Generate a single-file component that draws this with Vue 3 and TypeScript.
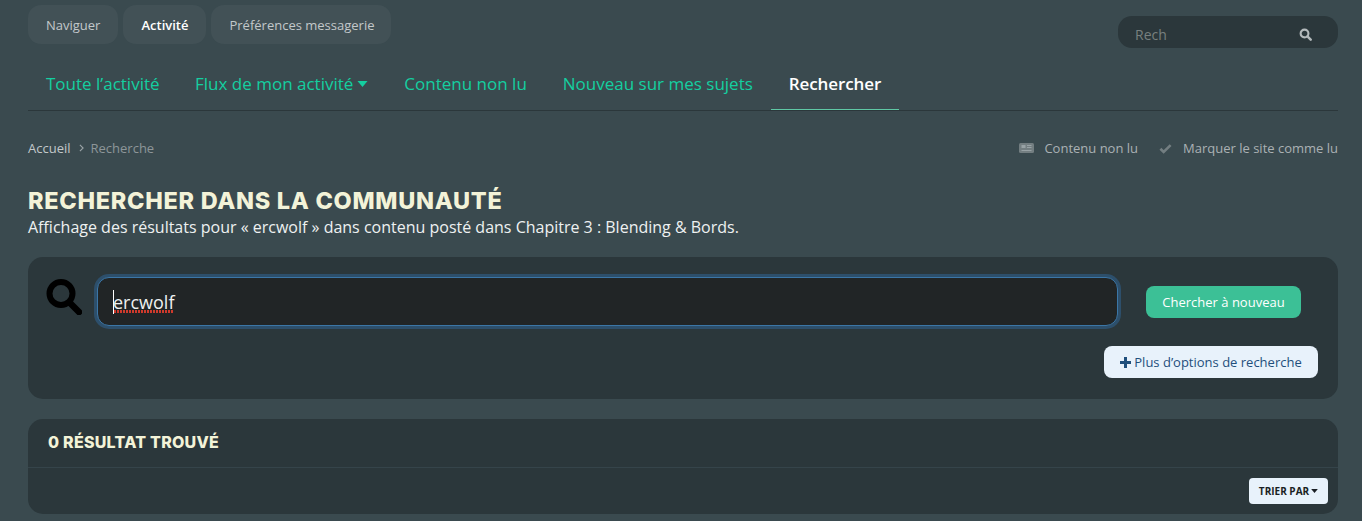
<script setup lang="ts">
const tabs: { label: string; active?: boolean }[] = [
  { label: 'Naviguer' },
  { label: 'Activité', active: true },
  { label: 'Préférences messagerie' },
]
const navItems: { label: string; caret?: boolean; active?: boolean }[] = [
  { label: 'Toute l’activité' },
  { label: 'Flux de mon activité', caret: true },
  { label: 'Contenu non lu' },
  { label: 'Nouveau sur mes sujets' },
  { label: 'Rechercher', active: true },
]
</script>

<template>
  <div class="page">
    <header class="head">
      <div class="top">
        <div class="tabs">
          <a v-for="t in tabs" :key="t.label" class="tab" :class="{ on: t.active }">{{ t.label }}</a>
        </div>
        <div class="search">
          <span class="ph">Rech</span>
          <svg class="s-ico" viewBox="0 0 16 16" width="13" height="13">
            <circle cx="6.8" cy="6.8" r="4.8" fill="none" stroke="currentColor" stroke-width="2.6" />
            <path d="M10.4 10.4 14.4 14.4" stroke="currentColor" stroke-width="3" stroke-linecap="round" />
          </svg>
        </div>
      </div>
      <nav class="nav">
        <a v-for="n in navItems" :key="n.label" class="nav-item" :class="{ on: n.active }">
          {{ n.label }}<svg v-if="n.caret" class="caret" viewBox="0 0 10 6" width="11" height="6"><path d="M0 0h10L5 6z" fill="currentColor" /></svg>
        </a>
      </nav>
    </header>

    <main class="main">
      <div class="crumbs">
        <div class="crumb-left">
          <span class="c1">Accueil</span>
          <svg class="chev" viewBox="0 0 6 10" width="5" height="8"><path d="M1 1l4 4-4 4" fill="none" stroke="currentColor" stroke-width="1.4" /></svg>
          <span class="c2">Recherche</span>
        </div>
        <div class="crumb-right">
          <span class="act">
            <svg viewBox="0 0 15 10" width="15" height="10" class="act-ico news">
              <rect width="15" height="10" rx="1.5" fill="currentColor" />
              <rect x="2.5" y="2" width="4" height="3" fill="#98a2a5" />
              <path d="M8 2.5h4.5M8 4.5h4.5M2.5 7.5h10" stroke="#98a2a5" stroke-width="1" />
            </svg>
            Contenu non lu
          </span>
          <span class="act">
            <svg viewBox="0 0 14 11" width="13" height="11" class="act-ico">
              <path d="M1.5 5.8 5 9.2 12.5 1.8" fill="none" stroke="currentColor" stroke-width="2.8" />
            </svg>
            Marquer le site comme lu
          </span>
        </div>
      </div>

      <h1 class="title">RECHERCHER DANS LA COMMUNAUTÉ</h1>
      <p class="sub">Affichage des résultats pour « ercwolf » dans contenu posté dans Chapitre 3 : Blending &amp; Bords.</p>

      <section class="card form">
        <div class="form-row">
          <svg class="big-ico" viewBox="0 0 36 36" width="36" height="36">
            <circle cx="15" cy="14.5" r="11.5" fill="none" stroke="#000" stroke-width="6" />
            <path d="M24 24 33 33" stroke="#000" stroke-width="6.5" stroke-linecap="round" />
          </svg>
          <div class="input"><span class="caret-bar"></span><span class="typed">ercwolf</span></div>
          <button class="btn-go">Chercher à nouveau</button>
        </div>
        <div class="form-more">
          <button class="btn-more">
            <svg viewBox="0 0 11 11" width="11" height="11"><path d="M4 0h3v4h4v3H7v4H4V7H0V4h4z" fill="currentColor" /></svg>
            Plus d’options de recherche
          </button>
        </div>
      </section>

      <section class="card results">
        <h2 class="res-title">0 RÉSULTAT TROUVÉ</h2>
        <div class="res-bar">
          <button class="btn-sort">TRIER PAR<svg viewBox="0 0 10 6" width="7" height="4"><path d="M0 0h10L5 6z" fill="currentColor" /></svg></button>
        </div>
      </section>
    </main>
  </div>
</template>

<style>
html, body { margin: 0; background: #3a4a4f; overflow: hidden; }
</style>

<style scoped>
.page {
  width: 1362px;
  height: 521px;
  overflow: hidden;
  background: #3a4a4f;
  font-family: "Open Sans", "Liberation Sans", sans-serif;
  color: #fff;
}
.head { padding: 5px 24px 0 28px; }
.top { display: flex; justify-content: space-between; align-items: flex-start; }
.tabs { display: flex; gap: 5px; }
.tab {
  height: 39px;
  padding: 0 18px;
  display: flex;
  align-items: center;
  border-radius: 13px;
  background: #425156;
  font-size: 13px;
  color: #c2c8ca;
}
.tab:last-child { padding-right: 17px; }
.tab.on { color: #fff; font-weight: 600; }
.search {
  width: 220px;
  height: 32px;
  margin-top: 11px;
  border-radius: 14px;
  background: #2b373b;
  display: flex;
  align-items: center;
  justify-content: space-between;
  padding: 4px 26px 0 17px;
  box-sizing: border-box;
  font-size: 14px;
  color: #78807f;
}
.s-ico { color: #b4babc; }
.nav {
  display: flex;
  margin-top: 9px;
  height: 53px;
  border-bottom: 1px solid #2b373b;
}
.nav-item {
  padding: 0 18px;
  height: 53px;
  box-sizing: border-box;
  display: flex;
  align-items: center;
  font-size: 17px;
  color: #14cfa0;
  white-space: nowrap;
}
.nav-item:first-child { padding-right: 17.5px; }
.nav-item.on { color: #fff; font-weight: 600; letter-spacing: -0.1px; border-bottom: 1px solid #5fc8a5; }
.caret { margin-left: 4px; margin-top: 1px; }
.main { padding: 0 24px 0 28px; }
.crumbs {
  display: flex;
  justify-content: space-between;
  align-items: center;
  height: 20px;
  margin-top: 27px;
  font-size: 13px;
}
.crumb-left { display: flex; align-items: center; }
.c1 { color: #c2c8ca; }
.chev { color: #9aa3a6; margin: 0 7px 0 8px; }
.c2 { color: #8d9699; }
.crumb-right { display: flex; gap: 21px; color: #aab1b4; }
.act { display: flex; align-items: center; }
.act-ico { color: #737e81; margin-right: 11px; }
.act-ico.news { margin-right: 10px; }
.title {
  margin: 29px 0 0;
  font-family: "Inter", "Liberation Sans", sans-serif;
  font-weight: 800;
  font-size: 23.5px;
  letter-spacing: 0.7px;
  line-height: 27px;
  color: #f3f3d8;
  white-space: nowrap;
}
.sub {
  margin: 0;
  font-size: 16px;
  line-height: 26px;
  color: #eef1f1;
}
.card {
  background: #2b373b;
  border-radius: 15px;
}
.form {
  margin-top: 17px;
  height: 142px;
  padding: 20px 20px 0 18px;
  box-sizing: border-box;
}
.form-row { display: flex; align-items: flex-start; }
.big-ico { margin-top: 2px; flex: none; }
.input {
  width: 1021px;
  height: 49px;
  margin-left: 15px;
  box-sizing: border-box;
  background: #212526;
  border: 1px solid #3b76a6;
  border-radius: 12px;
  box-shadow: 0 0 0 3px #2d4f6b;
  display: flex;
  align-items: center;
  padding-left: 15px;
  font-size: 18px;
  color: #eef1f1;
  position: relative;
}
.caret-bar { position: absolute; left: 15px; top: 12px; width: 1px; height: 24px; background: #fff; }
.typed { position: relative; }
.typed::after {
  content: "";
  position: absolute;
  left: 1px;
  right: 1px;
  bottom: 1px;
  height: 3px;
  background: repeating-linear-gradient(90deg, #cf3a2c 0 2px, transparent 2px 3px);
}
.btn-go {
  margin: 9px 0 0 28px;
  width: 155px;
  height: 32px;
  border: 0;
  border-radius: 8px;
  background: #3cc096;
  color: #fff;
  font: 400 13px "Open Sans", sans-serif;
  padding: 0;
}
.form-more { display: flex; justify-content: flex-end; margin-top: 20px; }
.btn-more {
  width: 214px;
  height: 32px;
  border: 0;
  border-radius: 8px;
  background: #e8f2fb;
  color: #1f4f7c;
  font: 400 13px "Open Sans", sans-serif;
  padding: 0;
  display: flex;
  align-items: center;
  justify-content: center;
  gap: 3px;
}
.results { margin-top: 20px; height: 95px; }
.res-title {
  margin: 0;
  height: 49px;
  box-sizing: border-box;
  padding: 0 20px 3px;
  display: flex;
  align-items: center;
  border-bottom: 1px solid #35444a;
  font-family: "Inter", "Liberation Sans", sans-serif;
  font-weight: 800;
  font-size: 16px;
  letter-spacing: 0.25px;
  color: #f3f3d8;
}
.res-bar { display: flex; justify-content: flex-end; padding: 10px 10px 0 0; }
.btn-sort {
  width: 79px;
  height: 26px;
  border: 0;
  border-radius: 4px;
  background: #e8f2fb;
  color: #1a1f24;
  font: 700 10px "Open Sans", sans-serif;
  padding: 0;
  display: flex;
  align-items: center;
  justify-content: center;
  gap: 2px;
}
</style>
